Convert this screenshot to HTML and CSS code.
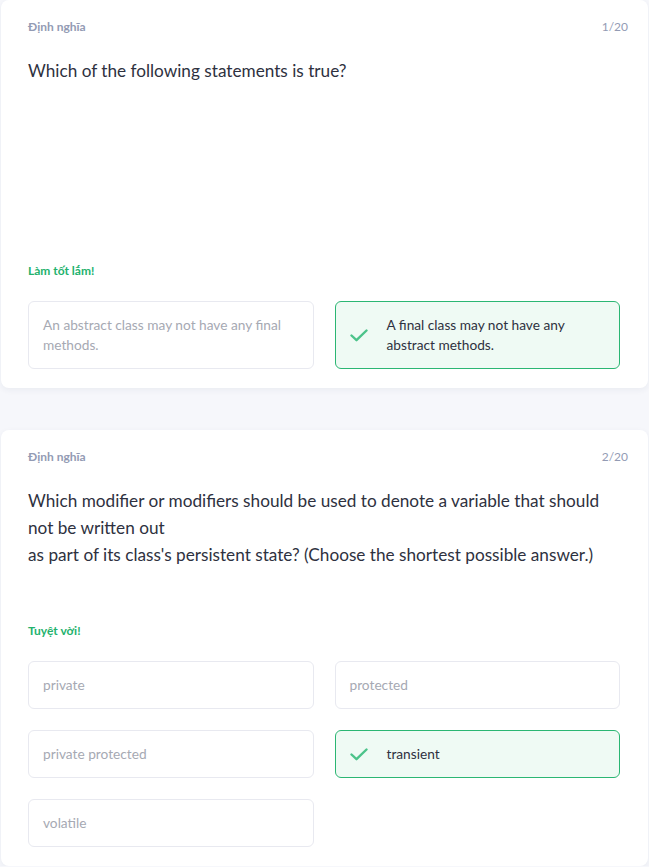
FILE: index.html
```html
<!DOCTYPE html>
<html lang="vi">
<head>
<meta charset="utf-8">
<link rel="stylesheet" href="styles.css">
</head>
<body>
<main class="list">
  <section class="card">
    <div class="card-head">
      <span class="label">Định nghĩa</span>
      <span class="count">1/20</span>
    </div>
    <p class="question question--tall">Which of the following statements is true?</p>
    <div class="feedback">Làm tốt lắm!</div>
    <div class="options">
      <div class="option">An abstract class may not have any final methods.</div>
      <div class="option option--correct">
        <svg class="check" viewBox="0 0 18 13" width="18" height="13"><path d="M1.5 6.5 L6.5 11.2 L16.5 1.5" fill="none" stroke="#4cc38a" stroke-width="2.4" stroke-linecap="round" stroke-linejoin="round"/></svg>
        <span>A final class may not have any abstract methods.</span>
      </div>
    </div>
  </section>
  <section class="card">
    <div class="card-head">
      <span class="label">Định nghĩa</span>
      <span class="count">2/20</span>
    </div>
    <p class="question">Which modifier or modifiers should be used to denote a variable that should not be written out<br>as part of its class's persistent state? (Choose the shortest possible answer.)</p>
    <div class="feedback">Tuyệt vời!</div>
    <div class="options">
      <div class="option">private</div>
      <div class="option">protected</div>
      <div class="option">private protected</div>
      <div class="option option--correct">
        <svg class="check" viewBox="0 0 18 13" width="18" height="13"><path d="M1.5 6.5 L6.5 11.2 L16.5 1.5" fill="none" stroke="#4cc38a" stroke-width="2.4" stroke-linecap="round" stroke-linejoin="round"/></svg>
        <span>transient</span>
      </div>
      <div class="option">volatile</div>
    </div>
  </section>
</main>
</body>
</html>
```

FILE: styles.css
```css
* { box-sizing: border-box; }
html, body {
  margin: 0;
  padding: 0;
  background: #f6f7fb;
  font-family: Lato, "Noto Sans", sans-serif;
}
.list {
  display: flex;
  flex-direction: column;
  gap: 42px;
  padding: 0 1px;
}
.card {
  background: #ffffff;
  border-radius: 8px;
  box-shadow: 0 2px 6px rgba(40, 50, 90, 0.06);
  padding: 18px 28px 19px 27px;
}
.card-head {
  display: flex;
  justify-content: space-between;
  align-items: center;
  height: 16px;
  margin-right: -8px;
  font-size: 12px;
  color: #939bb4;
}
.label { font-weight: 700; }
.count { font-weight: 400; }
.question {
  margin: 23px 0 54px;
  font-size: 17.2px;
  line-height: 27px;
  color: #2e3140;
}
.question--tall { min-height: 151px; }
.feedback {
  font-size: 12px;
  line-height: 18px;
  font-weight: 700;
  color: #23b26d;
  margin-bottom: 21px;
}
.options {
  display: grid;
  grid-template-columns: 1fr 1fr;
  gap: 21px;
}
.option {
  display: flex;
  align-items: center;
  gap: 19px;
  border: 1px solid #e8e9f0;
  border-radius: 6px;
  padding: 13px 14px;
  min-height: 48px;
  font-size: 13.7px;
  line-height: 20px;
  color: #a6a9b3;
}
.option--correct {
  background: #effaf4;
  border-color: #2bb673;
  color: #2e3140;
}
.check { flex: none; }
```
